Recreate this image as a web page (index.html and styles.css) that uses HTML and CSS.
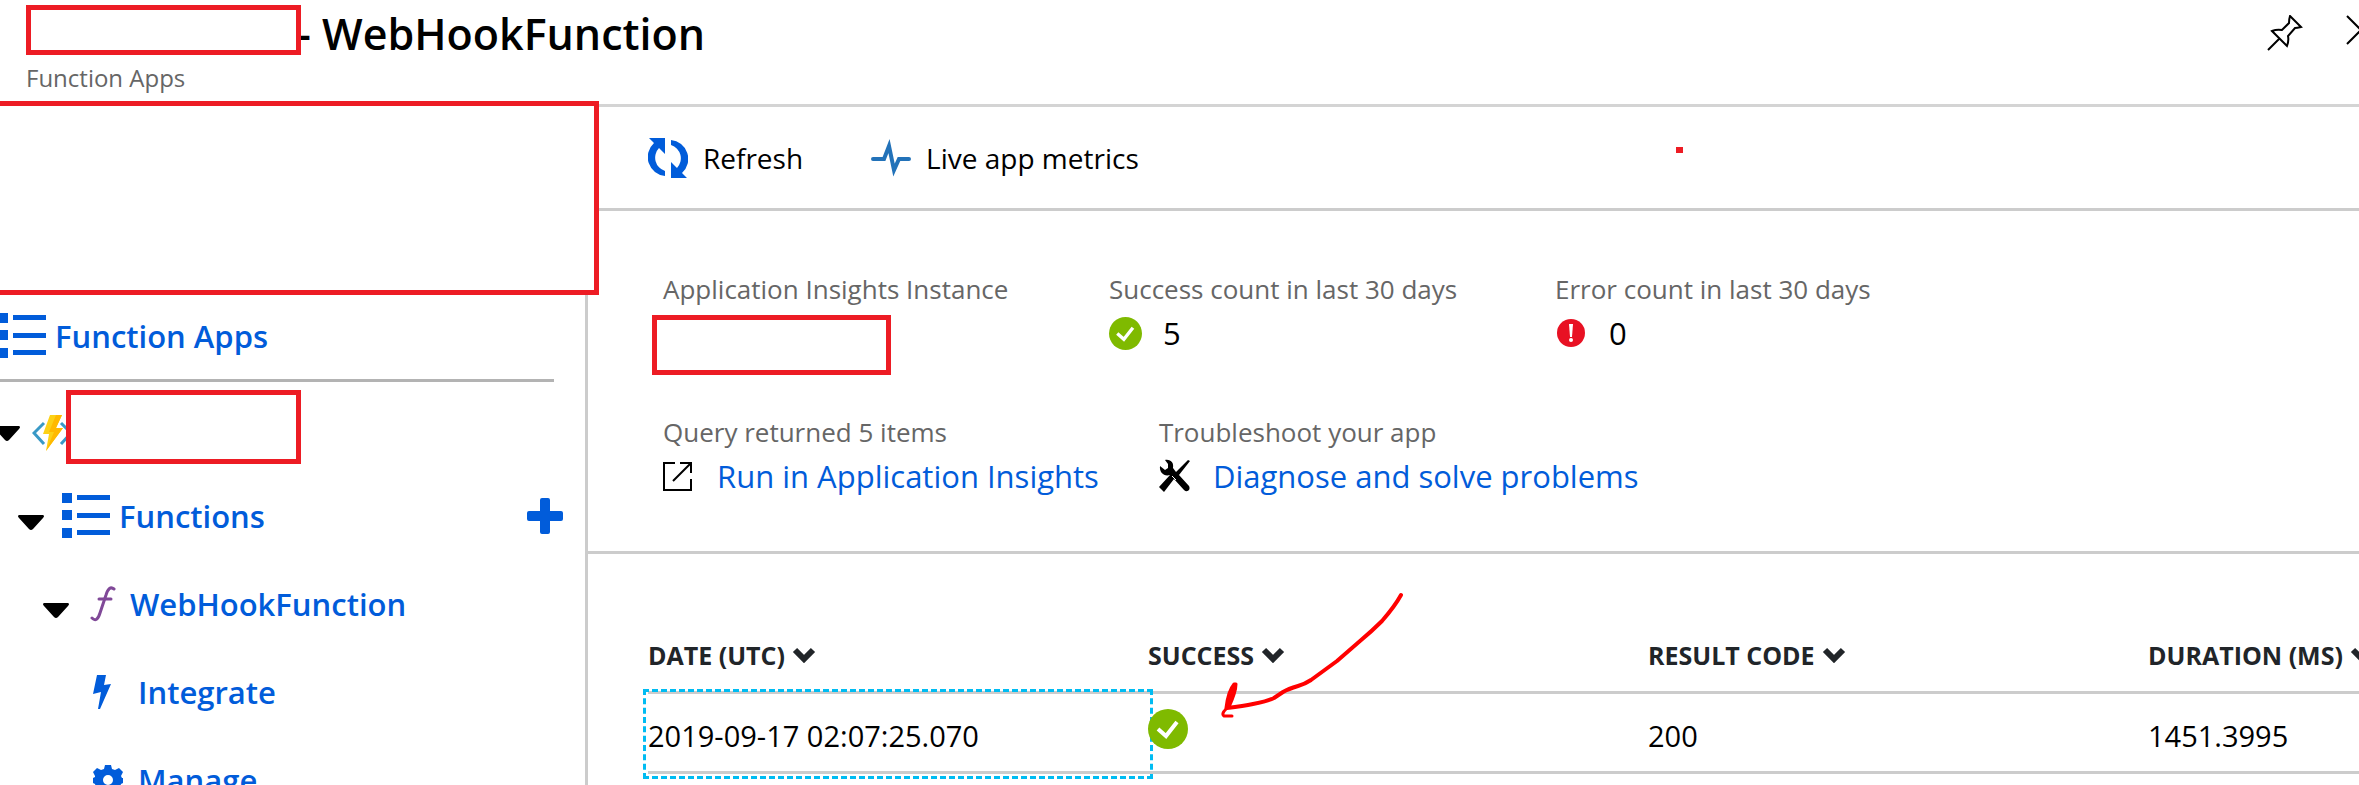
FILE: index.html
```html
<!DOCTYPE html>
<html lang="en">
<head>
<meta charset="utf-8">
<title>WebHookFunction</title>
<link rel="stylesheet" href="styles.css">
</head>
<body>
<svg class="defs" aria-hidden="true">
  <symbol id="list" viewBox="0 0 48 46"><path d="M0 0h10v10H0zM0 17h10v10H0zM0 35h10v10H0zM15 2h33v5H15zM15 20h33v5H15zM15 37h33v5H15z"/></symbol>
  <symbol id="caret" viewBox="0 0 26 16"><path d="M1 0H25Q27 1 25 3L15 14Q13 16 11 14L1 3Q-1 1 1 0Z"/></symbol>
  <symbol id="check" viewBox="0 0 40 40"><circle cx="20" cy="20" r="20" fill="#7fba00"/><path d="M10 20L18 27L29 13" fill="none" stroke="#fff" stroke-width="4"/></symbol>
  <symbol id="chevron" viewBox="0 0 24 16"><path d="M3 3L12 12L21 3" fill="none" stroke="currentColor" stroke-width="6"/></symbol>
</svg>
<header class="header">
  <div class="heading">
    <div class="title-row"><span class="redact redact-title"></span><h1>- WebHookFunction</h1></div>
    <p class="subtitle">Function Apps</p>
  </div>
  <div class="window-tools">
    <button aria-label="Pin"><svg width="36" height="36" viewBox="0 0 36 36" fill="none" stroke="#000" stroke-width="2"><path d="M1 35L13 23M23 1L34 12Q30 13 28 13L21 21Q22 26 20 31L5 16Q10 14 15 15L22 8Q22 4 23 1Z"/></svg></button>
    <button aria-label="Close"><svg width="30" height="30" viewBox="0 0 30 30" fill="none" stroke="#000" stroke-width="2"><path d="M1 1L29 29M29 1L1 29"/></svg></button>
  </div>
</header>
<div class="layout">
  <nav class="sidebar">
    <div class="redact redact-panel"></div>
    <div class="apps-row"><a href="#apps"><svg class="list-icon"><use href="#list"/></svg>Function Apps</a></div>
    <div class="node node-app">
      <button class="caret" aria-label="Collapse app"><svg><use href="#caret"/></svg></button>
      <svg class="app-icon" width="42" height="36" viewBox="0 0 42 36"><path d="M12 8L2 18L12 29M29 8L39 18L29 29" fill="none" stroke="#3999c6" stroke-width="3"/><path d="M18 0H30L24 13H31L14 36L17 19H11Z" fill="#fcd116"/><path d="M24 0H30L24 13H31L14 36L22 17H17Z" fill="#ffb900"/></svg>
      <span class="redact redact-app"></span>
    </div>
    <div class="node node-functions">
      <button class="caret" aria-label="Collapse functions"><svg><use href="#caret"/></svg></button>
      <a href="#functions"><svg class="list-icon"><use href="#list"/></svg>Functions</a>
      <button class="add" aria-label="New function"><svg width="36" height="36" viewBox="0 0 36 36"><path d="M15 0h6q2 0 2 2v11h11q2 0 2 2v6q0 2-2 2H23v11q0 2-2 2h-6q-2 0-2-2V23H2q-2 0-2-2v-6q0-2 2-2h11V2q0-2 2-2z"/></svg></button>
    </div>
    <div class="node node-hook">
      <button class="caret" aria-label="Collapse WebHookFunction"><svg><use href="#caret"/></svg></button>
      <a href="#webhook"><svg width="26" height="36" viewBox="0 0 26 36" fill="none" stroke="#804998" stroke-linecap="round"><path d="M2 32Q7 37 10 27L16 9Q19-1 24 3" stroke-width="3"/><path d="M9 13H21" stroke-width="3"/></svg>WebHookFunction</a>
    </div>
    <div class="node node-leaf"><a href="#integrate"><svg width="30" height="34" viewBox="0 0 30 34"><path d="M4 0H13L11 10L18 9L7 34H5L8 17L0 19Z"/></svg>Integrate</a></div>
    <div class="node node-leaf"><a href="#manage"><svg width="30" height="30" viewBox="0 0 30 30"><path fill-rule="evenodd" d="M12 0h6l1 4 3 1 4-2 4 4-2 4 1 2 1 0v5l-2 1-1 3 2 4-4 4-4-2-2 1-1 1h-6l-1-1-2-1-4 2-4-4 2-4-1-3-2-1v-5l2-1 0-1-2-4 4-4 4 2 3-1zM15 10a5 5 0 1 0 0 10a5 5 0 1 0 0-10z"/></svg>Manage</a></div>
  </nav>
  <main class="main">
    <div class="toolbar">
      <button><svg width="40" height="40" viewBox="0 0 40 40"><path d="M1 0H17V16L11 10A14 14 0 0 0 17 33V38A19 19 0 0 1 6 5ZM39 40H23V24L29 30A14 14 0 0 0 23 7V2A19 19 0 0 1 34 35Z" fill="#015cda"/></svg>Refresh</button>
      <button><svg width="40" height="40" viewBox="0 0 40 40"><path d="M2 21H13L18 8L23 32L28 21H38" fill="none" stroke="#2272b9" stroke-width="4" stroke-linecap="round" stroke-miterlimit="8"/></svg>Live app metrics</button>
      <span class="mark"></span>
    </div>
    <section class="summary">
      <div class="stats">
        <div class="stat"><p class="label">Application Insights Instance</p><span class="redact redact-instance"></span></div>
        <div class="stat"><p class="label">Success count in last 30 days</p><p class="value"><svg width="33" height="33"><use href="#check"/></svg>5</p></div>
        <div class="stat"><p class="label">Error count in last 30 days</p><p class="value"><svg width="33" height="28" viewBox="0 0 33 28"><circle cx="16" cy="14" r="14" fill="#e81123"/><path d="M14 5H18L17 18H15Z" fill="#fff"/><circle cx="16" cy="21" r="2" fill="#fff"/></svg>0</p></div>
      </div>
      <div class="actions">
        <div class="action"><p class="label">Query returned 5 items</p><a href="#query"><svg width="32" height="34" viewBox="0 0 32 34" fill="none" stroke="#000" stroke-width="2"><path d="M12 4H1V31H28V20M17 4H28V14M10 22L28 4"/></svg>Run in Application Insights</a></div>
        <div class="action"><p class="label">Troubleshoot your app</p><a href="#diagnose"><svg width="32" height="34" viewBox="0 0 32 34"><path d="M6 1C12 0 15 4 14 9L17 13L29 1L31 2L20 16L30 27C32 31 28 34 25 31L15 20L5 33L0 28L11 16C5 18 0 13 1 7L6 11L9 9V5Z"/><path d="M13 17L17 21" stroke="#fff" stroke-width="1"/></svg>Diagnose and solve problems</a></div>
      </div>
    </section>
    <section class="results">
      <table>
        <thead><tr>
          <th><button>DATE (UTC)<svg><use href="#chevron"/></svg></button></th>
          <th><button>SUCCESS<svg><use href="#chevron"/></svg></button></th>
          <th><button>RESULT CODE<svg><use href="#chevron"/></svg></button></th>
          <th><button>DURATION (MS)<svg><use href="#chevron"/></svg></button></th>
        </tr></thead>
        <tbody><tr>
          <td class="selected">2019-09-17 02:07:25.070</td>
          <td class="state"><svg class="status" role="img" aria-label="Success"><use href="#check"/></svg></td>
          <td>200</td>
          <td>1451.3995</td>
        </tr></tbody>
      </table>
      <svg class="arrow" width="186" height="128" viewBox="0 0 186 128" fill="none" stroke="#f00" stroke-width="4" stroke-linecap="round" stroke-linejoin="round"><path d="M181 3Q175 14 162 29Q152 39 140 49L117 69L91 88Q85 92 78 94Q68 97 63 100L54 106Q48 109 33 112Q24 114 7 116"/><path d="M14 92Q8 99 6 116L9 115Q16 100 16 92Z" fill="#f00" stroke-width="3"/><path d="M6 117Q1 122 4 124L12 124" stroke-width="3"/></svg>
    </section>
  </main>
</div>
</body>
</html>
```
FILE: styles.css
```css
* { box-sizing: border-box; margin: 0; padding: 0; }
body { height: 100vh; overflow: hidden; display: flex; flex-direction: column; background: #fff; color: #000; font: 28px/36px "Open Sans", "Noto Sans", sans-serif; }
button { border: 0; background: none; font: inherit; color: inherit; cursor: pointer; }
a { color: #015cda; text-decoration: none; }
svg { flex: none; }
.defs { position: absolute; width: 0; height: 0; }
.redact { display: block; border: 5px solid #ed1c24; background: #fff; }
.header { display: flex; justify-content: space-between; height: 107px; flex: none; border-bottom: 3px solid #d4d4d4; padding: 5px 0 0 26px; }
.title-row { display: flex; align-items: flex-start; height: 56px; }
.redact-title { position: relative; width: 275px; height: 50px; }
h1 { margin-left: -4px; font-size: 43px; line-height: 58px; font-weight: 600; }
.subtitle { font-size: 24px; line-height: 34px; color: #666; }
.window-tools { display: flex; align-items: flex-start; gap: 43px; padding-top: 10px; margin-right: -17px; }
.layout { display: flex; flex: 1; min-height: 0; }
.sidebar { position: relative; width: 588px; flex: none; border-right: 3px solid #ccc; padding-top: 186px; font-size: 31px; font-weight: 600; fill: #015cda; }
.redact-panel { position: absolute; z-index: 1; top: -6px; left: -5px; width: 604px; height: 194px; }
.sidebar a { display: flex; align-items: center; }
.apps-row { height: 89px; margin-right: 31px; border-bottom: 3px solid #b3b3b3; display: flex; }
.apps-row a { gap: 9px; margin-left: -2px; }
.list-icon { width: 48px; height: 46px; }
.node { height: 88px; display: flex; align-items: center; }
.caret { fill: #000; width: 26px; height: 16px; margin-top: 13px; }
.caret svg { display: block; width: 26px; height: 16px; }
.node-app { height: 90px; margin-left: -6px; }
.app-icon { margin: 12px 0 0 12px; }
.redact-app { position: relative; width: 235px; height: 74px; margin-left: -8px; }
.node-functions { padding: 0 22px 0 18px; }
.node-functions a { gap: 9px; margin-left: 18px; }
.add { margin-left: auto; height: 36px; }
.add svg { display: block; }
.node-hook { padding-left: 43px; }
.node-hook a { gap: 14px; margin-left: 21px; }
.node-leaf { padding-left: 93px; }
.node-leaf a { gap: 15px; }
.main { flex: 1; min-width: 0; display: flex; flex-direction: column; }
.toolbar { position: relative; display: flex; align-items: center; gap: 68px; height: 104px; border-bottom: 3px solid #ccc; padding-left: 60px; }
.toolbar button { display: flex; align-items: center; gap: 15px; }
.mark { position: absolute; left: 1088px; top: 40px; width: 7px; height: 6px; background: #ed1c24; }
.summary { height: 343px; border-bottom: 3px solid #ccc; padding: 60px 0 0 75px; }
.label { color: #666; font-size: 26px; line-height: 36px; }
.stats { display: flex; height: 143px; }
.stat { width: 446px; }
.redact-instance { width: 239px; height: 60px; margin: 8px 0 0 -11px; }
.value { display: flex; align-items: center; gap: 21px; margin-top: 4px; font-size: 31px; line-height: 44px; }
.actions { display: flex; gap: 60px; }
.action a { display: flex; align-items: center; gap: 22px; font-size: 31px; line-height: 52px; }
.results { position: relative; padding: 64px 0 0 60px; overflow: hidden; flex: 1; }
table { width: 2000px; table-layout: fixed; border-collapse: separate; border-spacing: 0; }
th { height: 76px; text-align: left; border-bottom: 3px solid #ccc; font-size: 25px; color: #212529; }
th button { display: flex; align-items: center; gap: 7px; font-weight: 700; }
th svg { width: 24px; height: 16px; }
td { position: relative; height: 80px; padding-top: 6px; border-bottom: 3px solid #ccc; font-size: 29px; }
td.state { padding: 0 0 7px; }
.selected::after { content: ""; position: absolute; inset: -5px -5px -8px -5px; border: 3px dashed #00bcf2; }
.status { display: block; width: 40px; height: 40px; }
.arrow { position: absolute; left: 632px; top: 38px; }
```
